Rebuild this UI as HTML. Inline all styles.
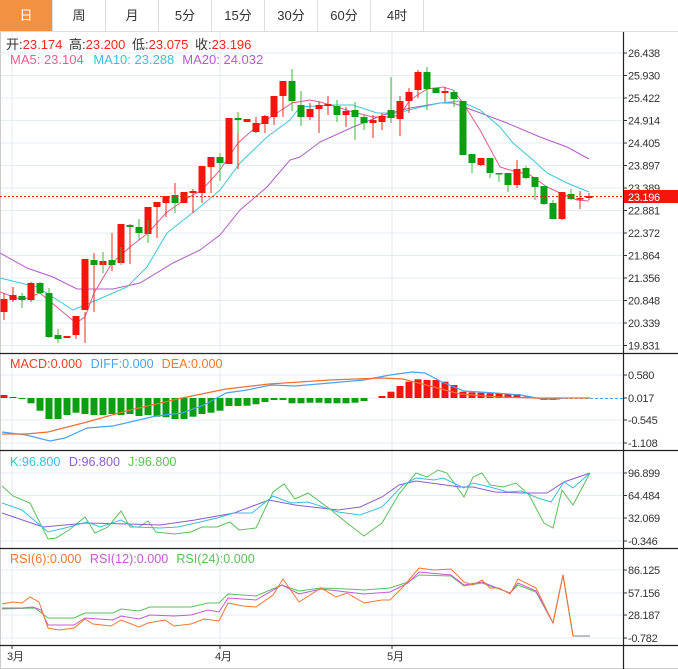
<!DOCTYPE html>
<html><head><meta charset="utf-8"><style>
body{margin:0;width:678px;height:669px;background:#fff;overflow:hidden;font-family:"Liberation Sans","Noto Sans CJK SC",sans-serif}
.tabs{position:absolute;left:0;top:0;width:678px;height:31px;border-bottom:1px solid #ddd}
.tab{position:absolute;top:0;height:31px;width:52px;border-right:1px solid #ddd;text-align:center;line-height:31px;font-size:13px;color:#333}
.tab.on{background:#f39142;color:#fff}
svg{position:absolute;left:0;top:0}
</style></head><body>
<div class="tabs">
<div class="tab on" style="left:0">日</div>
<div class="tab" style="left:53px">周</div>
<div class="tab" style="left:106px">月</div>
<div class="tab" style="left:159px">5分</div>
<div class="tab" style="left:212px">15分</div>
<div class="tab" style="left:265px">30分</div>
<div class="tab" style="left:318px">60分</div>
<div class="tab" style="left:371px">4时</div>
</div>
<svg width="678" height="669" viewBox="0 0 678 669" font-family="Liberation Sans, Noto Sans CJK SC, sans-serif">
<g stroke="#e4edf2" stroke-width="1">
<path d="M0 53H623M0 75.5H623M0 98H623M0 120.5H623M0 143H623M0 165.5H623M0 188H623M0 210.5H623M0 233H623M0 255.5H623M0 278H623M0 300.5H623M0 323H623M0 345.5H623"/>
<path d="M0 375H623M0 398H623M0 420H623M0 443H623M0 473H623M0 495.5H623M0 518H623M0 541H623M0 570H623M0 593H623M0 615H623M0 638H623"/>
<path d="M12 32V645M220 32V645M392 32V645"/>
</g>
<g stroke="#ccc"><path d="M0.5 32V669M0 668.5H678"/></g>
<g stroke="#222" stroke-width="1.2"><path d="M623.5 32V669M0 353.5H678M0 450.5H678M0 548.5H678M0 645.5H678"/></g>
<g stroke="#333"><path d="M623 53h4M623 75.5h4M623 98h4M623 120.5h4M623 143h4M623 165.5h4M623 188h4M623 210.5h4M623 233h4M623 255.5h4M623 278h4M623 300.5h4M623 323h4M623 345.5h4M623 375h4M623 398h4M623 420h4M623 443h4M623 473h4M623 495.5h4M623 518h4M623 541h4M623 570h4M623 593h4M623 615h4M623 638h4M12 645v4M220 645v4M392 645v4"/></g>
<g font-size="11" fill="#333" letter-spacing="-0.3">
<text x="628" y="57">26.438</text><text x="628" y="79.5">25.930</text><text x="628" y="102">25.422</text><text x="628" y="124.5">24.914</text><text x="628" y="147">24.405</text><text x="628" y="169.5">23.897</text><text x="628" y="192">23.389</text><text x="628" y="214.5">22.881</text><text x="628" y="237">22.372</text><text x="628" y="259.5">21.864</text><text x="628" y="282">21.356</text><text x="628" y="304.5">20.848</text><text x="628" y="327">20.339</text><text x="628" y="349.5">19.831</text>
<text x="628" y="379">0.580</text><text x="628" y="402">0.017</text><text x="628" y="424">-0.545</text><text x="628" y="447">-1.108</text>
<text x="628" y="477">96.899</text><text x="628" y="499.5">64.484</text><text x="628" y="522">32.069</text><text x="628" y="545">-0.346</text>
<text x="628" y="574">86.125</text><text x="628" y="597">57.156</text><text x="628" y="619">28.187</text><text x="628" y="642">-0.782</text>
<text x="7" y="660">3月</text><text x="215" y="660">4月</text><text x="387" y="660">5月</text>
</g>
<polyline fill="none" stroke="#b05cc8" stroke-width="1" points="0,253 27,268 53,277 77,289 113,289 140,283 173,263 200,250 220,235 240,210 267,187 290,160 300,157 320,142 353,127 383,115 410,108 440,103 453,103 467,108 507,123 540,137 567,147 589,159"/>
<polyline fill="none" stroke="#3ec6d8" stroke-width="1" points="0,278 37,287 73,310 90,303 127,287 147,267 167,233 200,207 220,190 240,163 267,137 290,120 300,107 333,105 353,105 377,113 397,113 417,108 440,103 460,101 480,110 500,127 513,143 533,160 547,173 567,183 589,192"/>
<polyline fill="none" stroke="#e85a8a" stroke-width="1" points="0,292 22,300 40,293 58,308 76,323 85,317 94,293 112,263 130,247 148,233 166,213 184,200 202,190 220,170 238,143 256,127 274,115 292,103 310,100 320,102 337,107 353,112 373,117 390,117 400,115 410,100 427,89 443,87 453,90 463,103 480,130 500,167 510,170 530,175 547,187 560,193 577,200 589,201"/>
<g stroke="#f0281e" stroke-width="1"><path d="M4 293V320M13 287V302M31 282V302M76 326V339M85 312V343M94 253V312M112 233V271M130 224V264M157 203V238M166 197V217M175 183V207M193 189V213M202 188V203M211 166V193M220 155V175M238 117V169M256 117V133M265 115V133M274 112V125M283 88V117M292 81V99M310 103V120M319 102V133M328 96V115M346 107V127M373 115V138M382 113V130M400 96V136M409 88V113M418 70V98M445 87V102M481 158V166M517 160V188M562 192V220M580 191V209M589 193V200"/></g>
<g fill="#f5150d">
<rect x="0.5" y="299" width="7" height="13"/><rect x="9.5" y="295" width="7" height="5"/><rect x="27.5" y="283" width="7" height="17"/><rect x="63.5" y="336" width="7" height="2"/><rect x="72.5" y="316" width="7" height="19"/><rect x="81.5" y="259" width="7" height="51"/><rect x="99.5" y="261" width="7" height="4"/><rect x="117.5" y="224" width="7" height="39"/><rect x="144.5" y="207" width="7" height="27"/><rect x="153.5" y="202" width="7" height="5"/><rect x="162.5" y="196" width="7" height="7"/><rect x="180.5" y="192" width="7" height="11"/><rect x="189.5" y="191" width="7" height="2"/><rect x="198.5" y="166" width="7" height="27"/><rect x="207.5" y="157" width="7" height="10"/><rect x="225.5" y="118" width="7" height="46"/><rect x="243.5" y="119" width="7" height="3"/><rect x="252.5" y="123" width="7" height="9"/><rect x="261.5" y="116" width="7" height="8"/><rect x="270.5" y="96" width="7" height="21"/><rect x="279.5" y="81" width="7" height="15"/><rect x="306.5" y="109" width="7" height="8"/><rect x="315.5" y="105" width="7" height="4"/><rect x="324.5" y="104" width="7" height="2"/><rect x="342.5" y="111" width="7" height="4"/><rect x="369.5" y="120" width="7" height="3"/><rect x="378.5" y="116" width="7" height="6"/><rect x="396.5" y="101" width="7" height="18"/><rect x="405.5" y="92" width="7" height="9"/><rect x="414.5" y="72" width="7" height="18"/><rect x="441.5" y="91" width="7" height="2"/><rect x="477.5" y="158" width="7" height="7"/><rect x="513.5" y="169" width="7" height="16"/><rect x="558.5" y="192" width="7" height="27"/><rect x="576.5" y="198" width="7" height="1.5"/><rect x="585.5" y="196" width="7" height="2"/>
</g>
<g stroke="#3cb83c" stroke-width="1"><path d="M22 293V308M40 282V293M49 288V338M58 329V343M103 252V273M121 247V265M139 219V240M148 220V243M175 193V213M220 153V181M238 112V133M292 69V111M301 91V126M337 100V122M355 102V140M364 115V130M391 77V123M427 67V110M436 88V93M454 90V107M463 101V155M472 154V173M490 158V178M499 173V182M508 173V192M526 166V179M535 177V200M544 186V205M553 200V219M571 189V200"/></g>
<g fill="#0a9e12">
<rect x="18.5" y="296" width="7" height="4"/><rect x="36.5" y="283" width="7" height="10"/><rect x="45.5" y="293" width="7" height="44"/><rect x="54.5" y="335" width="7" height="4"/><rect x="90.5" y="260" width="7" height="5"/><rect x="108.5" y="260" width="7" height="5"/><rect x="126.5" y="225" width="7" height="2"/><rect x="135.5" y="227" width="7" height="6"/><rect x="171.5" y="195" width="7" height="8"/><rect x="216.5" y="157" width="7" height="6"/><rect x="234.5" y="118" width="7" height="2"/><rect x="288.5" y="81" width="7" height="20"/><rect x="297.5" y="105" width="7" height="12"/><rect x="333.5" y="106" width="7" height="9"/><rect x="351.5" y="110" width="7" height="7"/><rect x="360.5" y="117" width="7" height="6"/><rect x="387.5" y="110" width="7" height="8"/><rect x="423.5" y="72" width="7" height="17"/><rect x="432.5" y="88" width="7" height="5"/><rect x="450.5" y="92" width="7" height="7"/><rect x="459.5" y="101" width="7" height="54"/><rect x="468.5" y="154" width="7" height="9"/><rect x="486.5" y="158" width="7" height="15"/><rect x="495.5" y="173" width="7" height="1.5"/><rect x="504.5" y="173" width="7" height="12"/><rect x="522.5" y="168" width="7" height="10"/><rect x="531.5" y="177" width="7" height="10"/><rect x="540.5" y="186" width="7" height="18"/><rect x="549.5" y="203" width="7" height="16"/><rect x="567.5" y="194" width="7" height="5"/>
</g>
<line x1="0" y1="196.5" x2="623" y2="196.5" stroke="#f0281e" stroke-dasharray="2,2"/>
<rect x="624" y="190" width="54" height="13" fill="#f5150d"/>
<text x="628" y="201" font-size="11" fill="#fff" letter-spacing="-0.3">23.196</text>
<g font-size="13">
<text x="6" y="49" fill="#333" word-spacing="3">开:<tspan fill="#f0281e">23.174</tspan>  高:<tspan fill="#f0281e">23.200</tspan>  低:<tspan fill="#f0281e">23.075</tspan>  收:<tspan fill="#f0281e">23.196</tspan></text>
<text x="10" y="64" fill="#e8608f">MA5: 23.104 <tspan fill="#3bbfd6" dx="6">MA10: 23.288</tspan><tspan fill="#b160c9" dx="8">MA20: 24.032</tspan></text>
</g>
<g font-size="12.6">
<text x="10" y="368" fill="#f03c28">MACD:0.000 <tspan fill="#4aa3ef" dx="5">DIFF:0.000</tspan><tspan fill="#f07830" dx="8">DEA:0.000</tspan></text>
<text x="10" y="466" fill="#3bbfd6">K:96.800 <tspan fill="#8d5cd0" dx="5">D:96.800</tspan><tspan fill="#5cbf5c" dx="8">J:96.800</tspan></text>
<text x="10" y="563" fill="#f07830">RSI(6):0.000 <tspan fill="#c25cd0" dx="5">RSI(12):0.000</tspan><tspan fill="#5cbf5c" dx="8">RSI(24):0.000</tspan></text>
</g>
<g fill="#f5150d">
<rect x="0.5" y="395" width="7" height="3"/><rect x="9.5" y="397" width="7" height="1"/>
<rect x="378.5" y="396" width="7" height="2"/><rect x="387.5" y="391.7" width="7" height="6.3"/><rect x="396.5" y="386" width="7" height="12"/><rect x="405.5" y="381.7" width="7" height="16.3"/><rect x="414.5" y="379.3" width="7" height="18.7"/><rect x="423.5" y="380" width="7" height="18"/><rect x="432.5" y="380" width="7" height="18"/><rect x="441.5" y="381.7" width="7" height="16.3"/><rect x="450.5" y="385" width="7" height="13"/><rect x="459.5" y="391.7" width="7" height="6.3"/><rect x="468.5" y="392.3" width="7" height="5.7"/><rect x="477.5" y="392.7" width="7" height="5.3"/><rect x="486.5" y="393.3" width="7" height="4.7"/><rect x="495.5" y="393.3" width="7" height="4.7"/><rect x="504.5" y="394" width="7" height="4"/><rect x="513.5" y="394" width="7" height="4"/><rect x="522.5" y="396.7" width="7" height="1.3"/>
</g>
<g fill="#0a9e12">
<rect x="18.5" y="398" width="7" height="1"/><rect x="27.5" y="398" width="7" height="5.3"/><rect x="36.5" y="398" width="7" height="12.7"/><rect x="45.5" y="398" width="7" height="21"/><rect x="54.5" y="398" width="7" height="21"/><rect x="63.5" y="398" width="7" height="17"/><rect x="72.5" y="398" width="7" height="14.7"/><rect x="81.5" y="398" width="7" height="16"/><rect x="90.5" y="398" width="7" height="17"/><rect x="99.5" y="398" width="7" height="17"/><rect x="108.5" y="398" width="7" height="16"/><rect x="117.5" y="398" width="7" height="17"/><rect x="126.5" y="398" width="7" height="16"/><rect x="135.5" y="398" width="7" height="18"/><rect x="144.5" y="398" width="7" height="17"/><rect x="153.5" y="398" width="7" height="18.7"/><rect x="162.5" y="398" width="7" height="19.3"/><rect x="171.5" y="398" width="7" height="21"/><rect x="180.5" y="398" width="7" height="21"/><rect x="189.5" y="398" width="7" height="18.7"/><rect x="198.5" y="398" width="7" height="16"/><rect x="207.5" y="398" width="7" height="14.7"/><rect x="216.5" y="398" width="7" height="12.7"/><rect x="225.5" y="398" width="7" height="8"/><rect x="234.5" y="398" width="7" height="8"/><rect x="243.5" y="398" width="7" height="7.7"/><rect x="252.5" y="398" width="7" height="6.3"/><rect x="261.5" y="398" width="7" height="4"/><rect x="270.5" y="398" width="7" height="2"/><rect x="279.5" y="398" width="7" height="2"/><rect x="288.5" y="398" width="7" height="5.3"/><rect x="297.5" y="398" width="7" height="5.3"/><rect x="306.5" y="398" width="7" height="4.7"/><rect x="315.5" y="398" width="7" height="4.7"/><rect x="324.5" y="398" width="7" height="5.3"/><rect x="333.5" y="398" width="7" height="5.3"/><rect x="342.5" y="398" width="7" height="5.3"/><rect x="351.5" y="398" width="7" height="4.7"/><rect x="360.5" y="398" width="7" height="3"/>
<rect x="540.5" y="398" width="7" height="2"/><rect x="549.5" y="398" width="7" height="2"/>
</g>
<polyline fill="none" stroke="#4aa3ef" stroke-width="1.2" points="2,432 26,435 50,441 65,438 87,428 113,426 130,422 156,416 182,413 204,405 226,393 247,390 271,385 295,386 330,383 364,380 390,375 412,372 425,373 442,382 464,391 495,393 521,395 542,399 560,399"/>
<line x1="560" y1="398.5" x2="623" y2="398.5" stroke="#4aa3ef" stroke-dasharray="3,2"/>
<polyline fill="none" stroke="#f07030" stroke-width="1.2" points="2,434 26,434 48,432 87,422 130,410 182,398 226,389 269,384 330,380 382,378 403,379 434,387 460,394 499,397 534,398 590,398"/>
<polyline fill="none" stroke="#5cbf5c" stroke-width="1" points="2,486 13,496 30,503 48,539 56,538 69,530 85,517 95,533 108,527 121,511 130,527 139,527 148,521 156,532 174,534 191,532 202,527 217,527 230,522 239,530 256,528 273,492 284,484 295,499 308,493 330,509 347,523 364,536 382,523 399,494 416,473 427,477 438,470 447,473 464,497 473,477 482,473 490,485 503,487 516,483 529,495 544,523 553,528 562,490 573,505 590,473"/>
<polyline fill="none" stroke="#8d5cd0" stroke-width="1" points="2,513 43,527 65,525 87,523 130,524 160,525 195,520 234,513 269,500 295,505 338,510 360,507 382,497 399,485 416,481 460,487 473,487 495,492 521,493 547,493 564,482 590,473"/>
<polyline fill="none" stroke="#3bbfd6" stroke-width="1" points="2,503 22,510 48,532 69,527 87,522 100,527 121,520 134,527 160,528 178,527 200,522 217,518 234,513 252,513 273,496 291,503 308,502 338,512 360,515 382,507 403,485 416,478 434,480 443,478 464,488 473,483 490,487 508,492 521,491 538,498 551,502 564,482 573,488 590,473"/>
<polyline fill="none" stroke="#5cbf5c" stroke-width="1" points="2,609 35,608 48,618 74,618 85,613 113,613 121,609 139,611 150,607 191,607 208,603 219,603 228,594 256,596 282,585 299,591 321,588 347,589 364,590 390,588 408,582 419,575 451,576 464,586 482,583 510,593 518,585 536,592 553,623 563,575 573,636"/>
<polyline fill="none" stroke="#c25cd0" stroke-width="1" points="2,608 22,608 33,607 41,610 48,625 74,625 85,618 113,620 121,616 139,619 150,615 174,616 191,615 208,610 219,612 228,598 256,600 282,585 299,594 321,589 347,592 364,594 390,592 408,583 419,572 451,575 464,585 482,582 510,593 518,583 536,591 553,623 563,575 573,636"/>
<polyline fill="none" stroke="#f07830" stroke-width="1" points="2,604 13,602 22,603 30,597 39,602 48,628 59,630 74,628 85,619 93,624 111,626 121,620 139,627 148,623 165,620 174,626 191,624 204,619 219,621 228,603 243,606 256,607 273,595 283,579 299,602 321,588 336,597 347,593 364,603 382,600 390,600 403,587 419,568 434,570 451,569 464,582 473,585 482,580 490,588 499,588 510,594 518,579 536,588 553,623 563,575 573,636"/>
<line x1="573" y1="636" x2="590" y2="636" stroke="#aaa" stroke-width="1.5"/>
</svg>
</body></html>
